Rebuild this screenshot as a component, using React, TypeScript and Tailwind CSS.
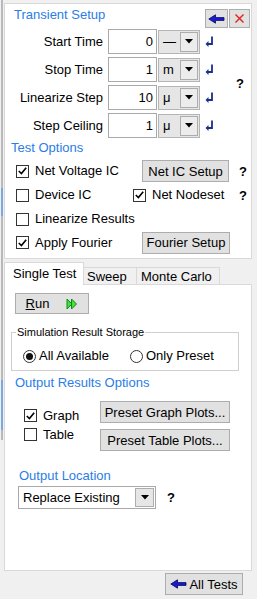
import type { ReactNode } from "react";

const font = "font-['Liberation_Sans',Arial,sans-serif]";

function DownArrow() {
  return (
    <svg width="8" height="5" viewBox="0 0 8 5">
      <path d="M0 0 L8 0 L4 4.5 Z" fill="#000" />
    </svg>
  );
}

function EnterIcon() {
  return (
    <svg width="9" height="11" viewBox="0 0 9 11">
      <path d="M7 0.5 V8 H2.5" fill="none" stroke="#1a2f8c" strokeWidth="1.8" />
      <path d="M0.5 8 L3.5 5 L3.5 11 Z" fill="#1a2f8c" />
    </svg>
  );
}

function BackArrow() {
  return (
    <svg width="17" height="10" viewBox="0 0 17 10">
      <path
        d="M0.8 5 L7.5 0.8 L7.5 3.6 L16 3.6 L16 6.4 L7.5 6.4 L7.5 9.2 Z"
        fill="#1a1ad6"
        stroke="#0a0a50"
        strokeWidth="0.8"
      />
    </svg>
  );
}

function RunIcon() {
  return (
    <svg width="12" height="12" viewBox="0 0 12 12">
      <path d="M1 1 L6 6 L1 11 Z" fill="#3fe03f" stroke="#138a13" strokeWidth="1" />
      <path d="M5.5 1 L10.5 6 L5.5 11 Z" fill="#3fe03f" stroke="#138a13" strokeWidth="1" />
    </svg>
  );
}

function Check({ checked }: { checked?: boolean }) {
  return (
    <span className="flex h-[13px] w-[13px] shrink-0 items-center justify-center border border-[#333] bg-white">
      {checked && (
        <svg width="9" height="8" viewBox="0 0 9 8">
          <path d="M0.8 4 L3.4 6.6 L8.2 0.8" fill="none" stroke="#000" strokeWidth="1.6" />
        </svg>
      )}
    </span>
  );
}

function Radio({ on }: { on?: boolean }) {
  return (
    <span className="flex h-[13px] w-[13px] shrink-0 items-center justify-center rounded-full border border-[#333] bg-white">
      {on && <span className="h-[7px] w-[7px] rounded-full bg-[#111]" />}
    </span>
  );
}

function Btn({ className, children }: { className: string; children: ReactNode }) {
  return (
    <div
      className={`flex items-center justify-center border border-[#adadad] bg-[#e1e1e1] text-[13px] leading-none text-black ${className}`}
    >
      {children}
    </div>
  );
}

function Heading({ className, children }: { className: string; children: ReactNode }) {
  return <div className={`text-[13px] leading-[16px] text-[#2a7de6] ${className}`}>{children}</div>;
}

function Q({ className = "" }: { className?: string }) {
  return <span className={`text-[13px] font-bold leading-none ${className}`}>?</span>;
}

const rows = [
  { label: "Start Time", value: "0", unit: "—" },
  { label: "Stop Time", value: "1", unit: "m" },
  { label: "Linearize Step", value: "10", unit: "μ" },
  { label: "Step Ceiling", value: "1", unit: "μ" },
];

export default function App() {
  return (
    <div className={`flex h-[599px] w-[257px] overflow-hidden bg-[#f0f0f0] text-black ${font}`}>
      {/* left splitter edge */}
      <div className="flex w-[4px] flex-col pl-[1px]">
        <div className="h-[188px] w-[2px] bg-[#b9b9b9]" />
        <div className="h-[28px] w-[2px] bg-[#7aa7e0]" />
        <div className="h-[164px] w-[2px] bg-[#b9b9b9]" />
        <div className="h-[50px] w-[2px] bg-[#7aa7e0]" />
        <div className="h-[10px] w-[2px] bg-[#b9b9b9]" />
      </div>

      <div className="flex w-[248px] flex-col pt-[3px]">
        {/* Transient setup panel */}
        <div className="flex h-[256px] flex-col border border-[#d9d9d9] bg-white">
          <div className="flex h-[25px] items-start justify-between">
            <Heading className="ml-[9px] mt-[3px]">Transient Setup</Heading>
            <div className="mr-[1px] mt-[5px] flex gap-[1px]">
              <Btn className="h-[19px] w-[23px]">
                <BackArrow />
              </Btn>
              <Btn className="h-[19px] w-[21px]">
                <svg width="9" height="9" viewBox="0 0 9 9">
                  <path d="M0.5 0.5 L8.5 8.5 M8.5 0.5 L0.5 8.5" stroke="#e0201c" strokeWidth="1.4" />
                </svg>
              </Btn>
            </div>
          </div>

          <div className="flex">
            <div className="flex flex-col gap-[3px]">
              {rows.map((r) => (
                <div key={r.label} className="flex h-[25px] items-center text-[13px]">
                  <div className="w-[98px] text-right">{r.label}</div>
                  <div className="ml-[5px] flex h-[25px] w-[49px] items-center justify-end border border-[#a9a9a9] bg-white pr-[3px]">
                    {r.value}
                  </div>
                  <div className="ml-[1px] flex h-[24px] w-[42px] items-center justify-between border border-[#b5b5b5] bg-[#e6e6e6] pl-[4px] pr-[1px]">
                    <span>{r.unit}</span>
                    <span className="flex h-[20px] w-[18px] items-center justify-center border border-[#adadad] bg-[#ececec]">
                      <DownArrow />
                    </span>
                  </div>
                  <div className="ml-[5px] flex items-center">
                    <EnterIcon />
                  </div>
                </div>
              ))}
            </div>
            <div className="flex flex-1 items-center justify-end pr-[7px]">
              <Q />
            </div>
          </div>

          <Heading className="ml-[6px] mt-[2px]">Test Options</Heading>

          <div className="mt-[3px] flex flex-col text-[13px]">
            <div className="flex h-[24px] items-center">
              <div className="flex w-[128px] items-center pl-[11px]">
                <Check checked />
                <span className="ml-[6px] whitespace-nowrap">Net Voltage IC</span>
              </div>
              <div className="flex w-[104px] pl-[9px]">
                <Btn className="h-[22px] w-[87px]">Net IC Setup</Btn>
              </div>
              <Q className="ml-[2px]" />
            </div>
            <div className="flex h-[24px] items-center">
              <div className="flex w-[128px] items-center pl-[11px]">
                <Check />
                <span className="ml-[6px]">Device IC</span>
              </div>
              <div className="flex w-[104px] items-center">
                <Check checked />
                <span className="ml-[6px]">Net Nodeset</span>
              </div>
              <Q className="ml-[2px]" />
            </div>
            <div className="flex h-[24px] items-center pl-[11px]">
              <Check />
              <span className="ml-[6px] whitespace-nowrap">Linearize Results</span>
            </div>
            <div className="flex h-[23px] items-center">
              <div className="flex w-[128px] items-center pl-[11px]">
                <Check checked />
                <span className="ml-[6px]">Apply Fourier</span>
              </div>
              <div className="flex pl-[9px]">
                <Btn className="h-[22px] w-[88px]">Fourier Setup</Btn>
              </div>
            </div>
          </div>
        </div>

        {/* tabs */}
        <div className="flex h-[26px] items-end text-[13px]">
          <div className="relative z-10 flex h-[23px] w-[80px] items-center border-x border-t border-[#d9d9d9] bg-white pl-[8px]">
            Single Test
          </div>
          <div className="flex h-[18px] w-[53px] items-center border-r border-t border-[#d9d9d9] pl-[3px]">
            Sweep
          </div>
          <div className="flex h-[18px] w-[83px] items-center border-r border-t border-[#d9d9d9] pl-[4px]">
            Monte Carlo
          </div>
        </div>

        <div className="-mt-px flex h-[287px] flex-col border border-[#d9d9d9] bg-white">
          <Btn className="ml-[10px] mt-[8px] h-[21px] w-[74px] gap-[17px]">
            <span>
              <span className="underline">R</span>un
            </span>
            <RunIcon />
          </Btn>

          <fieldset className="ml-[6px] mt-[12px] h-[45px] w-[228px] border border-[#cfcfcf] p-0">
            <legend className="ml-[4px] px-[1px] text-[11px] leading-[13px]">Simulation Result Storage</legend>
            <div className="mt-[5px] flex h-[24px] items-center text-[13px]">
              <div className="ml-[11px] flex w-[107px] items-center">
                <Radio on />
                <span className="ml-[3px]">All Available</span>
              </div>
              <Radio />
              <span className="ml-[3px]">Only Preset</span>
            </div>
          </fieldset>

          <Heading className="ml-[10px] mt-[4px]">Output Results Options</Heading>

          <div className="flex text-[13px]">
            <div className="ml-[19px] mt-[16px] flex w-[76px] flex-col gap-[2px]">
              <div className="flex h-[17px] items-center">
                <Check checked />
                <span className="ml-[6px]">Graph</span>
              </div>
              <div className="flex h-[17px] items-center">
                <Check />
                <span className="ml-[6px]">Table</span>
              </div>
            </div>
            <div className="mt-[10px] flex flex-col gap-[6px]">
              <Btn className="h-[22px] w-[130px]">Preset Graph Plots...</Btn>
              <Btn className="h-[22px] w-[130px]">Preset Table Plots...</Btn>
            </div>
          </div>

          <Heading className="ml-[14px] mt-[17px]">Output Location</Heading>

          <div className="ml-[13px] mt-[2px] flex items-center text-[13px]">
            <div className="flex h-[23px] w-[138px] items-center justify-between border border-[#a9a9a9] bg-white pl-[4px] pr-[1px]">
              <span>Replace Existing</span>
              <span className="flex h-[19px] w-[19px] items-center justify-center border border-[#adadad] bg-[#e6e6e6]">
                <DownArrow />
              </span>
            </div>
            <Q className="ml-[11px]" />
          </div>
        </div>

        <div className="mt-[2px] flex justify-end pr-[9px]">
          <Btn className="h-[22px] w-[78px] gap-[2px]">
            <BackArrow />
            <span>All Tests</span>
          </Btn>
        </div>
      </div>
    </div>
  );
}
